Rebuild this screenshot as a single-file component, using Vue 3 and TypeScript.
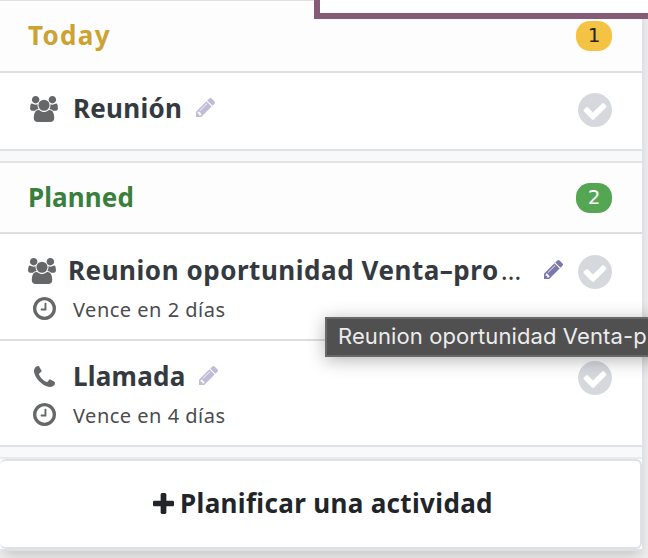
<script setup lang="ts">
import { computed, h, type FunctionalComponent } from 'vue'

interface Glyph { box: string; d: string }
interface Activity { id: number; icon: string; title: string; clipped?: boolean; due?: string; active?: boolean }
interface Group { key: string; label: string; items: Activity[]; count: number }

const glyphs: Record<string, Glyph> = {
  users: {
    box: '64 0 1920 1792',
    d: 'M657 896q-162 5-265 128h-134q-82 0-138-40.5t-56-118.5q0-353 124-353 6 0 43.5 21t97.5 42.5 119 21.5q67 0 133-23-5 37-5 66 0 139 81 256zm1071 637q0 120-73 189.5t-194 69.5h-874q-121 0-194-69.5t-73-189.5q0-53 3.5-103.5t14-109 26.5-108.5 43-97.5 62-81 85.5-53.5 111.5-20q10 0 43 21.5t73 48 107 48 135 21.5 135-21.5 107-48 73-48 43-21.5q61 0 111.5 20t85.5 53.5 62 81 43 97.5 26.5 108.5 14 109 3.5 103.5zm-1024-1277q0 106-75 181t-181 75-181-75-75-181 75-181 181-75 181 75 75 181zm704 384q0 159-112.5 271.5t-271.5 112.5-271.5-112.5-112.5-271.5 112.5-271.5 271.5-112.5 271.5 112.5 112.5 271.5zm576 225q0 78-56 118.5t-138 40.5h-134q-103-123-265-128 81-117 81-256 0-29-5-66 66 23 133 23 59 0 119-21.5t97.5-42.5 43.5-21q124 0 124 353zm-128-609q0 106-75 181t-181 75-181-75-75-181 75-181 181-75 181 75 75 181z',
  },
  pencil: {
    box: '128 149 1515 1515',
    d: 'M491 1536l91-91-235-235-91 91v107h128v128h107zm523-928q0-22-22-22-10 0-17 7l-542 542q-7 7-7 17 0 22 22 22 10 0 17-7l542-542q7-7 7-17zm-54-192l416 416-832 832h-416v-416zm683 96q0 53-37 90l-166 166-416-416 166-165q36-38 90-38 53 0 91 38l235 234q37 39 37 91z',
  },
  check: {
    box: '128 128 1536 1536',
    d: 'M1412 734q0-28-18-46l-91-90q-19-19-45-19t-45 19l-408 407-226-226q-19-19-45-19t-45 19l-91 90q-18 18-18 46 0 27 18 45l362 362q19 19 45 19 27 0 46-19l543-543q18-18 18-45zm252 162q0 209-103 385.5t-279.5 279.5-385.5 103-385.5-103-279.5-279.5-103-385.5 103-385.5 279.5-279.5 385.5-103 385.5 103 279.5 279.5 103 385.5z',
  },
  phone: {
    box: '192 128 1408 1408',
    d: 'M1600 1240q0 27-10 70.5t-21 68.5q-21 50-122 106-94 51-186 51-27 0-53-3.5t-57.5-12.5-47-14.5-55.5-20.5-49-18q-98-35-175-83-127-79-264-216t-216-264q-48-77-83-175-3-9-18-49t-20.5-55.5-14.5-47-12.5-57.5-3.5-53q0-92 51-186 56-101 106-122 25-11 68.5-21t70.5-10q14 0 21 3 18 6 53 76 11 19 30 54t35 63.5 31 53.5q3 4 17.5 25t21.5 35.5 7 28.5q0 20-28.5 50t-62 55-62 53-28.5 46q0 9 5 22.5t8.5 20.5 14 24 11.5 19q76 137 174 235t235 174q2 1 19 11.5t24 14 20.5 8.5 22.5 5q18 0 46-28.5t53-62 55-62 50-28.5q14 0 28.5 7t35.5 21.5 25 17.5q25 15 53.5 31t63.5 35 54 30q70 35 76 53 3 7 3 21z',
  },
  clock: {
    box: '128 128 1536 1536',
    d: 'M1024 544v448q0 14-9 23t-23 9h-320q-14 0-23-9t-9-23v-64q0-14 9-23t23-9h224v-352q0-14 9-23t23-9h64q14 0 23 9t9 23zm416 352q0-148-73-273t-198-198-273-73-273 73-198 198-73 273 73 273 198 198 273 73 273-73 198-198 73-273zm224 0q0 209-103 385.5t-279.5 279.5-385.5 103-385.5-103-279.5-279.5-103-385.5 103-385.5 279.5-279.5 385.5-103 385.5 103 279.5 279.5 103 385.5z',
  },
  plus: {
    box: '192 128 1408 1408',
    d: 'M1600 736v192q0 40-28 68t-68 28h-416v416q0 40-28 68t-68 28h-192q-40 0-68-28t-28-68v-416h-416q-40 0-68-28t-28-68v-192q0-40 28-68t68-28h416v-416q0-40 28-68t68-28h192q40 0 68 28t28 68v416h416q40 0 68 28t28 68z',
  },
}

const Icon: FunctionalComponent<{ name: string }> = (props) =>
  h('svg', { viewBox: glyphs[props.name].box, fill: 'currentColor', 'aria-hidden': 'true' }, [
    h('path', { d: glyphs[props.name].d }),
  ])
Icon.props = ['name']

const today: Activity[] = [{ id: 1, icon: 'users', title: 'Reunión' }]
const planned: Activity[] = [
  { id: 2, icon: 'users', title: 'Reunion oportunidad Venta–pro', clipped: true, due: 'Vence en 2 días', active: true },
  { id: 3, icon: 'phone', title: 'Llamada', due: 'Vence en 4 días' },
]

const groups = computed<Group[]>(() => [
  { key: 'today', label: 'Today', items: today, count: today.length },
  { key: 'planned', label: 'Planned', items: planned, count: planned.length },
])
</script>

<template>
  <div class="screen">
    <div class="popover">
      <section v-for="g in groups" :key="g.key" class="group" :class="g.key">
        <header class="head">
          <span class="label">{{ g.label }}</span>
          <span class="badge">{{ g.count }}</span>
        </header>
        <article v-for="a in g.items" :key="a.id" class="item" :class="{ wide: a.clipped, tall: a.due }">
          <div class="info">
            <div class="line">
              <Icon :name="a.icon" class="kind" :class="a.icon" />
              <span class="title">{{ a.title }}<span v-if="a.clipped" class="dots">…</span></span>
              <Icon name="pencil" class="edit" :class="{ on: a.active }" />
            </div>
            <div v-if="a.due" class="line due">
              <Icon name="clock" class="clock" />
              <span class="when">{{ a.due }}</span>
            </div>
          </div>
          <Icon name="check" class="done" />
        </article>
      </section>
      <footer class="foot">
        <button class="plan" type="button">
          <Icon name="plus" class="plus" />
          <span class="plan-text">Planificar una actividad</span>
        </button>
      </footer>
    </div>
    <div class="frame"></div>
    <div class="tooltip">Reunion oportunidad Venta-p</div>
  </div>
</template>

<style>
body { margin: 0; overflow: hidden; }
</style>

<style scoped>
.screen {
  position: relative;
  box-sizing: border-box;
  width: 648px;
  height: 558px;
  overflow: hidden;
  background: #ededed;
  font-family: "Lucida Grande", "Noto Sans", sans-serif;
  color: #343a40;
}
.popover {
  box-sizing: border-box;
  width: 644px;
  height: 551px;
  border-top: 1px solid #dee2e6;
  border-right: 2px solid #dee2e6;
  border-bottom: 2px solid #dee2e6;
  border-radius: 0 0 7px 7px;
  background: #f8f9fb;
  box-shadow: 0 8px 12px -4px rgba(0, 0, 0, .16);
}
.group { border-bottom: 2px solid #dee1e6; margin-bottom: 10px; }
.planned { border-top: 2px solid #e2e3e4; }
.head {
  box-sizing: border-box;
  height: 72px;
  padding: 0 30px 0 28px;
  display: flex;
  align-items: center;
  justify-content: space-between;
  background: #fdfdfd;
  border-bottom: 2px solid #dedede;
}
.planned .head { height: 71px; padding-top: 1px; }
.label { padding-bottom: 3px; font-size: 26px; line-height: 36px; font-weight: 700; white-space: nowrap; }
.today .label { color: #cca233; letter-spacing: 1.3px; }
.planned .label { color: #3b7f3d; letter-spacing: .1px; }
.badge {
  width: 36px;
  height: 30px;
  border-radius: 14px;
  font: 20px/28px "DejaVu Sans", sans-serif;
  text-align: center;
}
.today .badge { background: #f5c344; color: #212529; }
.planned .badge { background: #55a653; color: #fff; }
.item {
  box-sizing: border-box;
  height: 76px;
  padding: 19px 30px 0 28px;
  display: flex;
  align-items: flex-start;
  justify-content: space-between;
  background: #fff;
}
.item.tall { height: 105px; padding-top: 20px; }
.item.tall + .item.tall { height: 106px; padding-top: 19px; border-top: 2px solid #dedede; }
.line { display: flex; align-items: center; height: 33px; }
.kind { flex: none; color: #666769; width: 28px; height: 26px; margin: 0 15px 0 2px; }
.kind.phone { width: 21px; height: 21px; margin: 0 18px 1px 6px; }
.wide .kind { margin: 0 12px 0 0; }
.title { font-size: 26px; line-height: 33px; font-weight: 700; letter-spacing: .25px; white-space: nowrap; }
.wide .title { letter-spacing: .54px; }
.dots { font-weight: 400; margin-left: 2px; }
.edit { width: 19px; height: 19px; margin: 0 0 2px 14px; color: #bfbcd8; }
.phone + .title + .edit { margin-left: 13px; }
.edit.on { color: #7c78ad; margin-left: 22px; }
.due { height: 42px; margin-top: 2px; }
.clock { width: 23px; height: 23px; margin: 0 17px 4px 5px; color: #666769; }
.when { font-size: 20px; line-height: 28px; letter-spacing: .5px; color: #4a4c4f; white-space: nowrap; }
.done { flex: none; width: 34px; height: 34px; margin-top: 1px; color: #d5d9de; }
.foot { border-top: 2px solid #e9ebed; background: #fff; }
.plan {
  box-sizing: border-box;
  width: 642px;
  height: 90px;
  margin: 0;
  padding: 0 0 0 6px;
  display: flex;
  align-items: center;
  justify-content: center;
  gap: 6px;
  border: 2px solid #dee2e6;
  border-left-width: 0;
  border-radius: 6px;
  background: #fff;
  font: 700 26px/36px "Lucida Grande", "Noto Sans", sans-serif;
  color: #212529;
}
.plus { width: 21px; height: 21px; margin-bottom: 2px; }
.plan-text { padding-bottom: 2px; letter-spacing: .34px; white-space: nowrap; }
.frame {
  position: absolute;
  box-sizing: border-box;
  left: 314px;
  top: -8px;
  width: 350px;
  height: 27px;
  border: 6px solid #845c78;
  background: #fff;
}
.tooltip {
  position: absolute;
  box-sizing: border-box;
  left: 325px;
  top: 317px;
  width: 360px;
  height: 40px;
  padding-left: 11px;
  border: 2px solid #686868;
  background: #505050;
  box-shadow: 0 3px 18px rgba(0, 0, 0, .3);
  font: 22px/35px Inter, sans-serif;
  letter-spacing: .1px;
  color: #ececec;
  white-space: nowrap;
}
</style>
